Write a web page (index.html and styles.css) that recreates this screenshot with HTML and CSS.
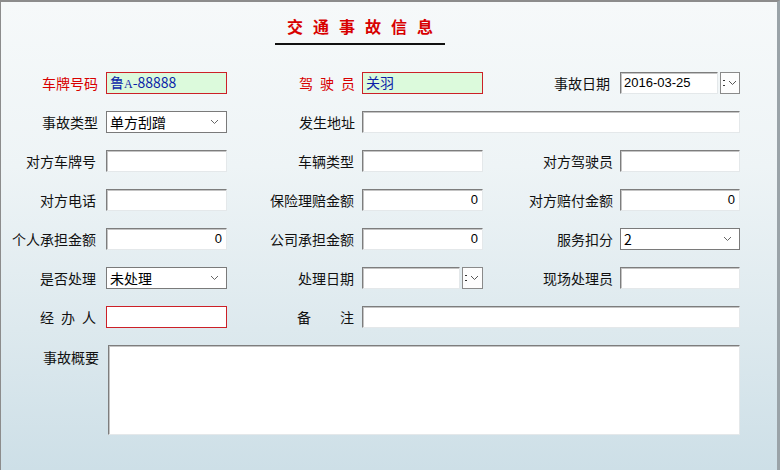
FILE: index.html
```html
<!DOCTYPE html>
<html lang="zh-CN">
<head>
  <meta charset="UTF-8">
  <title>交通事故信息</title>
  <link rel="stylesheet" href="styles.css">
</head>
<body>
  <div class="window">
    <!-- Title with underline -->
    <div class="header">
      <h1 class="title">交通事故信息</h1>
    </div>

    <div class="form">
      <!-- row 1 -->
      <label class="lbl req">车牌号码</label>
      <div class="field must green"><span class="blue">鲁<span class="serif">A</span>-88888</span></div>
      <label class="lbl req spaced">驾驶员</label>
      <div class="field must green"><span class="blue">关羽</span></div>
      <label class="lbl">事故日期</label>
      <div class="date">
        <div class="field">2016-03-25</div>
        <div class="date-btn"><span class="dots"></span><svg width="9" height="6" viewBox="0 0 9 6"><path d="M1 1 L4.5 4.5 L8 1" fill="none" stroke="#555" stroke-width="1"/></svg></div>
      </div>

      <!-- row 2 -->
      <label class="lbl">事故类型</label>
      <div class="select">单方刮蹭<svg width="9" height="6" viewBox="0 0 9 6"><path d="M1 1 L4.5 4.5 L8 1" fill="none" stroke="#666" stroke-width="1"/></svg></div>
      <label class="lbl">发生地址</label>
      <div class="field wide"></div>

      <!-- row 3 -->
      <label class="lbl">对方车牌号</label>
      <div class="field"></div>
      <label class="lbl">车辆类型</label>
      <div class="field"></div>
      <label class="lbl">对方驾驶员</label>
      <div class="field"></div>

      <!-- row 4 -->
      <label class="lbl">对方电话</label>
      <div class="field"></div>
      <label class="lbl">保险理赔金额</label>
      <div class="field num">0</div>
      <label class="lbl">对方赔付金额</label>
      <div class="field num">0</div>

      <!-- row 5 -->
      <label class="lbl">个人承担金额</label>
      <div class="field num">0</div>
      <label class="lbl">公司承担金额</label>
      <div class="field num">0</div>
      <label class="lbl">服务扣分</label>
      <div class="select">2<svg width="9" height="6" viewBox="0 0 9 6"><path d="M1 1 L4.5 4.5 L8 1" fill="none" stroke="#666" stroke-width="1"/></svg></div>

      <!-- row 6 -->
      <label class="lbl">是否处理</label>
      <div class="select">未处理<svg width="9" height="6" viewBox="0 0 9 6"><path d="M1 1 L4.5 4.5 L8 1" fill="none" stroke="#666" stroke-width="1"/></svg></div>
      <label class="lbl">处理日期</label>
      <div class="date">
        <div class="field"></div>
        <div class="date-btn"><span class="dots"></span><svg width="9" height="6" viewBox="0 0 9 6"><path d="M1 1 L4.5 4.5 L8 1" fill="none" stroke="#555" stroke-width="1"/></svg></div>
      </div>
      <label class="lbl">现场处理员</label>
      <div class="field"></div>

      <!-- row 7 -->
      <label class="lbl spaced">经办人</label>
      <div class="field must"></div>
      <label class="lbl"><span class="gap">备</span>注</label>
      <div class="field wide"></div>

      <!-- summary -->
      <label class="lbl top">事故概要</label>
      <div class="field memo"></div>
    </div>
  </div>
</body>
</html>
```

FILE: styles.css
```css
body {
  margin: 0;
  font-family: "Noto Sans CJK SC", "Liberation Sans", sans-serif;
}
.window {
  width: 780px;
  height: 470px;
  box-sizing: border-box;
  border-top: 2px solid #8c8c8c;
  border-left: 1px solid #8c8c8c;
  border-right: 3px solid #9aa3a8;
  background: linear-gradient(to bottom, #f6f9fa 0%, #eef4f6 35%, #dde9ee 70%, #cddfe7 100%);
}
/* title block */
.header {
  width: 170px;
  margin-left: 274px;
  padding-top: 13px;
  border-bottom: 2px solid #111;
  text-align: center;
}
.title {
  margin: 0 0 6px 0;
  font-size: 16px;
  line-height: 22px;
  font-weight: bold;
  color: #d80000;
  letter-spacing: 10px;
  padding-left: 10px;
}
/* form grid */
.form {
  display: grid;
  grid-template-columns: 105px 121px 135px 121px 137px 120px;
  grid-auto-rows: 22px;
  row-gap: 17px;
  margin-top: 27px;
}
.lbl {
  font-size: 14px;
  line-height: 22px;
  text-align: right;
  color: #111;
  white-space: nowrap;
}
.form > .lbl { padding-right: 8px; }
.form > .lbl:nth-of-type(3n+2) { padding-right: 7px; }
.form > .lbl:nth-of-type(3n) { padding-right: 10px; }
.lbl.req { color: #d80000; }
.lbl.spaced { letter-spacing: 7px; margin-right: -7px; }
.lbl.top { line-height: 24px; }
.gap { margin-right: 29px; }
/* inputs */
.field {
  box-sizing: border-box;
  height: 22px;
  background: #fff;
  border: 1px solid;
  border-color: #7d7d7d #e4e8ea #e4e8ea #7d7d7d;
  box-shadow: inset 1px 1px 0 #c4c4c4;
  font-family: "Liberation Sans", "Noto Sans CJK SC", sans-serif;
  font-size: 13px;
  line-height: 19px;
  padding: 0 4px 0 3px;
  color: #000;
  overflow: hidden;
}
.field.num { text-align: right; }
.field.must {
  border: 1px solid #cc2027;
  box-shadow: none;
}
.field.green { background: #dcfadc; }
.field.wide { grid-column: 4 / 7; }
.field.memo {
  grid-column: 2 / 7;
  margin-left: 2px;
  height: 90px;
}
.blue {
  color: #0b1fa8;
  font-family: "Noto Sans CJK SC", sans-serif;
  font-size: 14px;
}
.serif {
  font-family: "Liberation Serif", serif;
  font-size: 12px;
}
/* dropdowns */
.select {
  box-sizing: border-box;
  height: 22px;
  background: #fff;
  border: 1px solid #7a7a7a;
  font-size: 14px;
  line-height: 20px;
  padding: 0 7px 0 3px;
  display: flex;
  justify-content: space-between;
  align-items: center;
}
/* date picker */
.date {
  display: flex;
  gap: 2px;
}
.date .field {
  width: 98px;
  flex: none;
}
.date-btn {
  box-sizing: border-box;
  width: 21px;
  height: 22px;
  border: 1px solid #8a8a8a;
  background: #fdfdfd;
  display: flex;
  align-items: center;
  gap: 3px;
  padding-left: 2px;
}
.dots {
  width: 2px;
  height: 10px;
  background: radial-gradient(circle, #333 0.9px, transparent 1px) 0 0 / 2px 5px repeat-y;
}
```
